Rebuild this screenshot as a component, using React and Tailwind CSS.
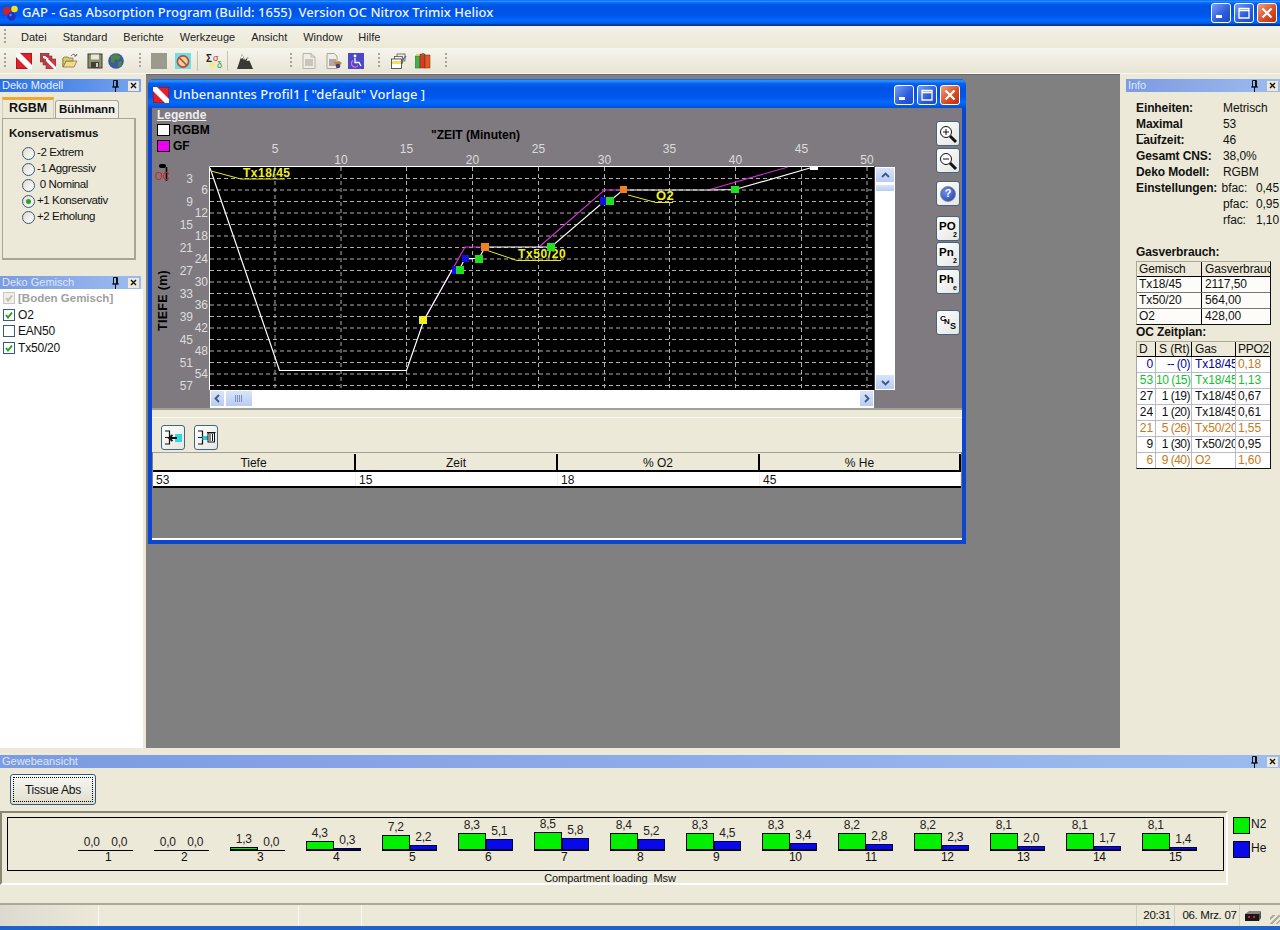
import React from "react";

const Flag = ({ s = 16 }) => (
  <svg width={s} height={s} viewBox="0 0 16 16" className="block">
    <rect x="0" y="0" width="16" height="16" fill="#e0202a" stroke="#400" strokeWidth="0.6" />
    <path d="M0 0H4L16 12V16H12L0 4Z" fill="#fff" />
  </svg>
);
const Flags = () => (
  <svg width="16" height="16" viewBox="0 0 16 16" className="block">
    <rect x="0" y="0" width="9" height="9" fill="#c04048" stroke="#533" strokeWidth="0.5" />
    <rect x="3" y="3" width="9" height="9" fill="#c84048" stroke="#533" strokeWidth="0.5" />
    <rect x="6" y="6" width="10" height="10" fill="#d03a44" stroke="#533" strokeWidth="0.5" />
    <path d="M6 6H8L16 14V16H14L6 8Z" fill="#fff" />
    <path d="M3 3H5L9 6H6L3 5Z" fill="#fff" />
  </svg>
);
const Folder = () => (
  <svg width="16" height="16" viewBox="0 0 16 16" className="block">
    <path d="M1 5V14H12L15 8H4L1 14" fill="#f0dc90" stroke="#8a7a30" strokeWidth="0.8" />
    <path d="M1 5L2 4H6L7 5H11V8H4L1 14Z" fill="#d8c878" stroke="#8a7a30" strokeWidth="0.8" />
    <path d="M9 3C11 0.5 13 1 14 3M14 3L15 1M14 3L12 3" fill="none" stroke="#556" strokeWidth="0.9" />
  </svg>
);
const Floppy = () => (
  <svg width="16" height="16" viewBox="0 0 16 16" className="block">
    <rect x="1" y="1" width="14" height="14" fill="#8f8f70" stroke="#3a3a30" />
    <rect x="4" y="1.5" width="8" height="5" fill="#e8e8d8" />
    <rect x="4" y="9" width="8" height="6" fill="#404038" />
    <rect x="9" y="10" width="2" height="4" fill="#ccc" />
  </svg>
);
const Globe = () => (
  <svg width="16" height="16" viewBox="0 0 16 16" className="block">
    <circle cx="8" cy="8" r="7.8" fill="#3c5a9c" />
    <path d="M3 3L8 1L13 4L10 7L7 6L6 10L3 9ZM10 9L14 8L13 13L10 14Z" fill="#4e8a3e" />
  </svg>
);
const NoSym = () => (
  <svg width="16" height="16" viewBox="0 0 16 16" className="block">
    <rect width="16" height="16" fill="#6fe0e0" />
    <circle cx="8" cy="8.5" r="5.6" fill="#e4d890" stroke="#c04848" strokeWidth="1.7" />
    <path d="M4 4.5L12 12.5" stroke="#c04848" strokeWidth="1.7" />
  </svg>
);
const Sigma = () => (
  <svg width="17" height="16" viewBox="0 0 17 16" className="block">
    <circle cx="6" cy="12" r="3" fill="#f0ec90" />
    <text x="0" y="9" fontSize="10" fontWeight="700" fill="#222" fontFamily="Liberation Sans, sans-serif">Σ</text>
    <text x="7" y="8" fontSize="9" fill="#e02020" fontFamily="Liberation Sans, sans-serif">σ</text>
    <text x="11" y="15" fontSize="9" fill="#28a028" fontFamily="Liberation Sans, sans-serif">δ</text>
  </svg>
);
const Mountain = () => (
  <svg width="16" height="16" viewBox="0 0 16 16" className="block">
    <path d="M0 16L5 1L8 7L11 4L16 16Z" fill="#3a3a34" />
    <path d="M5 1L3.5 6L5.5 5L7.5 7.5ZM11 4L9.5 8L11.5 7.5L13 8.5Z" fill="#fff" />
  </svg>
);
const Doc = () => (
  <svg width="14" height="16" viewBox="0 0 14 16" className="block">
    <path d="M1 0.5H9L13 4V15.5H1Z" fill="#f0eee4" stroke="#b8b4a4" />
    <rect x="3" y="6" width="8" height="7" fill="#c8c6bc" />
    <path d="M9 0.5V4H13" fill="none" stroke="#b8b4a4" />
  </svg>
);
const Doc2 = () => (
  <svg width="16" height="16" viewBox="0 0 16 16" className="block">
    <path d="M1 0.5H8L11 3V15.5H1Z" fill="#f0eee4" stroke="#a8a494" />
    <rect x="3" y="6" width="7" height="7" fill="#b0a8a8" />
    <path d="M8 9L13 8L16 10L12 14L9 12Z" fill="#b88a40" />
    <circle cx="12" cy="13" r="2.3" fill="#484070" />
  </svg>
);
const Wheel = () => (
  <svg width="16" height="16" viewBox="0 0 16 16" className="block">
    <rect width="16" height="16" fill="#4a4ac8" />
    <circle cx="7" cy="3" r="1.4" fill="#fff" />
    <path d="M7 5V9.5H11L13 13" stroke="#fff" strokeWidth="1.3" fill="none" />
    <path d="M5 7.5A3.6 3.6 0 1 0 10 12.5" stroke="#f070c0" strokeWidth="1.2" fill="none" />
  </svg>
);
const Stack = () => (
  <svg width="16" height="16" viewBox="0 0 16 16" className="block">
    <rect x="6" y="1" width="8" height="7" fill="#f0eee4" stroke="#444" strokeWidth="0.7" />
    <rect x="3.5" y="3.5" width="8" height="7" fill="#f0eee4" stroke="#444" strokeWidth="0.7" />
    <rect x="0.5" y="6" width="10" height="9.5" fill="#fff" stroke="#333" strokeWidth="0.8" />
    <rect x="1" y="8" width="9" height="3" fill="#f0e060" />
    <path d="M10 9L15 3" stroke="#668" strokeWidth="1.2" />
  </svg>
);
const Books = () => (
  <svg width="16" height="16" viewBox="0 0 16 16" className="block">
    <rect x="0" y="3" width="5" height="12" fill="#48b048" stroke="#263" strokeWidth="0.5" />
    <rect x="5" y="1" width="5" height="14" fill="#d83a28" stroke="#722" strokeWidth="0.5" />
    <rect x="10" y="2" width="5" height="13" fill="#e05a20" stroke="#722" strokeWidth="0.5" />
    <rect x="1" y="1" width="3" height="2" fill="#e8d040" />
    <rect x="7" y="0" width="2" height="2" fill="#40a040" />
  </svg>
);
const AppLogo = () => (
  <svg width="18" height="18" viewBox="0 0 18 18" className="block">
    <circle cx="5" cy="7" r="4" fill="#d82020" />
    <circle cx="12.5" cy="5" r="3.3" fill="#f0e020" />
    <circle cx="9.5" cy="12.5" r="4.2" fill="#2030c0" />
    <circle cx="8.5" cy="11" r="1.2" fill="#7080e0" />
  </svg>
);

const Grip = ({ className = "" }) => (
  <span className={`block w-[2px] h-[16px] bg-[repeating-linear-gradient(180deg,#a8a594_0_2px,transparent_2px_4px)] ${className}`} />
);
const TSep = ({ className = "" }) => <span className={`block w-[1px] h-[20px] bg-[#c5c2b0] ${className}`} />;

const Pin = () => (
  <svg width="7" height="12" viewBox="0 0 7 12" className="block">
    <path d="M1.5 0.5H5.5V7H1.5ZM0 7H7M3.5 7V12M4.5 1V7" fill="none" stroke="#111" strokeWidth="1" />
  </svg>
);
const CloseBox = () => (
  <span className="flex items-center justify-center w-[11px] h-[10px] bg-[#ece9d8]">
    <svg width="7" height="7" viewBox="0 0 7 7" className="block">
      <path d="M1 1L6 6M6 1L1 6" stroke="#111" strokeWidth="1.4" />
    </svg>
  </span>
);
const DockHead = ({ title, active, className = "" }) => (
  <div
    className={`flex items-center h-[13px] pl-[2px] text-[11px] leading-none ${className} ${
      active
        ? "bg-[linear-gradient(90deg,#2a70e0,#7aa5ee)] text-[#e8f0ff]"
        : "bg-[linear-gradient(90deg,#7b9be2,#9cbcef)] text-[#dfe7f7]"
    }`}
  >
    <span className="flex-1 truncate">{title}</span>
    <span className="mr-[9px]"><Pin /></span>
    <span className="mr-[2px]"><CloseBox /></span>
  </div>
);

const WinBtn = ({ kind }) => {
  const bg =
    kind === "x"
      ? "bg-[linear-gradient(135deg,#f0a080,#d84a20_60%,#b83010)]"
      : "bg-[linear-gradient(135deg,#7aa0f0,#2a5ae0_60%,#2048c8)]";
  return (
    <span className={`flex items-center justify-center w-[20px] h-[20px] rounded-[3px] border border-white ${bg}`}>
      <svg width="14" height="14" viewBox="0 0 14 14" className="block">
        {kind === "min" && <rect x="2" y="9" width="6" height="3" fill="#fff" />}
        {kind === "max" && <path d="M2 4.5H12V12H2ZM2 2.5H12V4.5H2Z" fill="none" stroke="#fff" strokeWidth="1.3" />}
        {kind === "x" && <path d="M2.5 2.5L11.5 11.5M11.5 2.5L2.5 11.5" stroke="#fff" strokeWidth="2.2" />}
      </svg>
    </span>
  );
};

const Radio = ({ on, label }) => (
  <div className="flex items-center h-[16px] pl-[19px]">
    <span className="flex items-center justify-center w-[13px] h-[13px] rounded-full border border-[#3a5a78] bg-[linear-gradient(135deg,#dcdcd0,#fff)]">
      {on && <span className="block w-[5px] h-[5px] rounded-full bg-[#2da02d]" />}
    </span>
    <span className="ml-[2px] text-[11.5px] tracking-[-0.4px] whitespace-pre">{label}</span>
  </div>
);

const Check = ({ on, dis, label, bold }) => (
  <div className="flex items-center h-[16.5px] pl-[3px]">
    <span className={`flex items-center justify-center w-[12px] h-[12px] border ${dis ? "border-[#c8c8bc] bg-[#f0f0e8]" : "border-[#3a5a78] bg-white"}`}>
      {on && (
        <svg width="10" height="10" viewBox="0 0 10 10" className="block">
          <path d="M2 5L4 7.5L8 2.5" fill="none" stroke={dis ? "#bbb" : "#21a121"} strokeWidth="2" />
        </svg>
      )}
    </span>
    <span className={`ml-[3px] ${bold ? "font-bold text-[#a0a0a0] text-[11.5px]" : "text-[12px] tracking-[-0.2px] text-[#111]"}`}>{label}</span>
  </div>
);

const MenuItem = ({ label, className }) => <span className={`text-[11px] text-[#222] ${className}`}>{label}</span>;

const xs = [5, 10, 15, 20, 25, 30, 35, 40, 45, 50];
const xPos = [275, 341, 406.5, 472.5, 538.5, 604.5, 669.5, 735.5, 801.5, 867];
const depths = Array.from({ length: 19 }, (_, i) => (i + 1) * 3);
const yOf = (i) => 178.5 + i * 11.5;

const Chart = () => (
  <svg width="723" height="282" viewBox="152 108 723 282" className="block">
    <text x="431" y="139" fontSize="12" fontWeight="700" fill="#000">"ZEIT (Minuten)</text>
    {xs.map((v, i) => (
      <text key={v} x={xPos[i]} y={i % 2 === 0 ? 153 : 164} textAnchor="middle" fontSize="12" fill="#dcdcdc">{v}</text>
    ))}
    {depths.map((d, i) => (
      <text key={d} x={i % 2 === 0 ? 193 : 208} y={yOf(i) + 4} textAnchor="end" fontSize="12" fill="#dcdcdc">{d}</text>
    ))}
    <text transform="translate(167 331) rotate(-90)" fontSize="12.5" fontWeight="700" letterSpacing="0.3" fill="#000">TIEFE (m)</text>
    <rect x="159" y="164" width="7" height="4" rx="2" fill="#000" />
    <path d="M166.5 167V181" stroke="#000" strokeWidth="1.6" />
    <text x="155" y="180" fontSize="10" fill="#d02020">OC</text>

    <rect x="209.5" y="166.5" width="665" height="224" fill="#000" />
    <path d="M209.5 390V166.5H874" fill="none" stroke="#fff" />
    {depths.map((d, i) => (
      <path key={d} d={`M210 ${yOf(i)}H873`} stroke="#b0b0b0" strokeDasharray="4 3" />
    ))}
    {xPos.map((x) => (
      <path key={x} d={`M${x} 167V390`} stroke="#b0b0b0" strokeDasharray="4 3" />
    ))}
    <path d="M424 320L465 247H485M539 247L604.5 190H623M710 189.5L788 167" fill="none" stroke="#d030d0" strokeWidth="1.2" />
    <path d="M210 168L279.5 370.5H406.5L424 320L452 270H459L465 258.5H479L485 247H539L551 247L604.5 201H610L623 190H710L735 189.5L810 168" fill="none" stroke="#fff" strokeWidth="1.2" />
    <path d="M211 171L241 179H285" fill="none" stroke="#e8e820" />
    <path d="M486 250L517 260.5H561" fill="none" stroke="#e8e820" />
    <path d="M628 195L656 202.5H673" fill="none" stroke="#e8e820" />
    <text x="243" y="177" fontSize="12" fontWeight="700" letterSpacing="0.5" fill="#f0f020">Tx18/45</text>
    <text x="518" y="258" fontSize="12" fontWeight="700" letterSpacing="0.6" fill="#f0f020">Tx50/20</text>
    <text x="656" y="200" fontSize="13" fontWeight="700" letterSpacing="0.5" fill="#f0f020">O2</text>
    <rect x="419" y="316" width="8" height="8" fill="#f0f020" />
    <rect x="452" y="266" width="7" height="8" fill="#1010e0" />
    <rect x="456" y="266" width="8" height="8" fill="#20e020" />
    <rect x="462" y="255" width="7" height="7" fill="#1010e0" />
    <rect x="475" y="255" width="8" height="8" fill="#20e020" />
    <rect x="481" y="243" width="8" height="8" fill="#f08020" />
    <rect x="547" y="243" width="8" height="8" fill="#20e020" />
    <rect x="600" y="197" width="7" height="8" fill="#1010e0" />
    <rect x="606" y="197" width="8" height="8" fill="#20e020" />
    <rect x="620" y="186" width="7" height="7" fill="#f08020" />
    <rect x="731" y="186" width="8" height="7" fill="#20e020" />
    <rect x="810" y="167" width="8" height="3" fill="#fff" />
  </svg>
);

const SBtn = ({ dir, className = "" }) => (
  <span className={`flex items-center justify-center bg-[linear-gradient(180deg,#d8e4fb,#b8ccf2)] border border-white ${className}`}>
    <svg width="9" height="9" viewBox="0 0 9 9" className="block">
      <path
        d={{ up: "M1 6L4.5 2.5L8 6", down: "M1 3L4.5 6.5L8 3", left: "M6 1L2.5 4.5L6 8", right: "M3 1L6.5 4.5L3 8" }[dir]}
        fill="none"
        stroke="#3f5a84"
        strokeWidth="1.8"
      />
    </svg>
  </span>
);

const ToolBtn = ({ children, className = "" }) => (
  <div className={`flex items-center justify-center w-[24px] h-[25px] rounded-[3px] border border-[#45657f] bg-[linear-gradient(135deg,#fff,#e4e6e2)] ${className}`}>
    {children}
  </div>
);
const Mag = ({ plus }) => (
  <svg width="20" height="20" viewBox="0 0 20 20" className="block">
    <circle cx="8" cy="8" r="5.5" fill="#fff" stroke="#111" />
    <path d={plus ? "M5 8H11M8 5V11" : "M5 8H11"} stroke="#111" />
    <path d="M12 12L18 18" stroke="#111" strokeWidth="3" />
  </svg>
);
const SubBtn = ({ main, sub, className }) => (
  <ToolBtn className={className}>
    <span className="relative block w-[18px] h-[20px] text-[11.5px] font-bold leading-[15px] text-black text-left">
      {main}
      <span className="absolute right-0 bottom-[0px] text-[7px] leading-[8px]">{sub}</span>
    </span>
  </ToolBtn>
);

const TreeIcon = ({ del }) => (
  <svg width="20" height="20" viewBox="0 0 20 20" className="block">
    <path d="M2 3H6.5V16H2M2 9.5H6.5" fill="none" stroke="#111" strokeWidth="1.2" />
    {del ? (
      <>
        <rect x="6.5" y="8" width="6" height="4" fill="#30c8d0" />
        <rect x="12" y="5" width="6.5" height="9" fill="#fff" stroke="#111" />
        <path d="M11 4.5H19.5M14 6V13M16.5 6V13" fill="none" stroke="#111" />
      </>
    ) : (
      <>
        <rect x="12" y="6" width="7" height="8" fill="#30d8e0" />
        <path d="M6 10H14M9.5 7L6 10L9.5 13" fill="none" stroke="#111" strokeWidth="1.8" />
      </>
    )}
  </svg>
);

const infoRows = [
  ["Einheiten:", "Metrisch"],
  ["Maximal Tiefe:", "53", true],
  ["Laufzeit:", "46"],
  ["Gesamt CNS:", "38,0%"],
  ["Deko Modell:", "RGBM"],
];
const gasRows = [
  ["Tx18/45", "2117,50"],
  ["Tx50/20", "564,00"],
  ["O2", "428,00"],
];
const B = "text-[#00009a]";
const G = "text-[#10c030]";
const K = "text-[#111]";
const O = "text-[#c47a20]";
const planRows = [
  { d: "0", s: "-- (0)", g: "Tx18/45", p: "0,18", c: B, pc: O },
  { d: "53", s: "10 (15)", g: "Tx18/45", p: "1,13", c: G, pc: G },
  { d: "27", s: "1 (19)", g: "Tx18/45", p: "0,67", c: K, pc: K },
  { d: "24", s: "1 (20)", g: "Tx18/45", p: "0,61", c: K, pc: K },
  { d: "21", s: "5 (26)", g: "Tx50/20", p: "1,55", c: O, pc: O },
  { d: "9", s: "1 (30)", g: "Tx50/20", p: "0,95", c: K, pc: K },
  { d: "6", s: "9 (40)", g: "O2", p: "1,60", c: O, pc: O },
];
const tissue = [
  [0, 0], [0, 0], [1.3, 0], [4.3, 0.3], [7.2, 2.2], [8.3, 5.1], [8.5, 5.8], [8.4, 5.2],
  [8.3, 4.5], [8.3, 3.4], [8.2, 2.8], [8.2, 2.3], [8.1, 2.0], [8.1, 1.7], [8.1, 1.4],
];
const fmt = (n) => n.toFixed(1).replace(".", ",");

const Bar = ({ v, blue }) => (
  <div className="flex flex-col items-center justify-end w-[27.5px]">
    <span className="text-[12px] leading-[13px] tracking-[-0.3px] text-[#222] pb-[1px]">{fmt(v)}</span>
    {v > 0 && (
      <div
        style={{ height: Math.max(1, v * 2.08) }}
        className={`w-full border ${blue ? "bg-[#0808e8] border-[#000050]" : "bg-[#00f000] border-black"}`}
      />
    )}
  </div>
);

export default function App() {
  return (
    <div className="flex flex-col w-[1280px] h-[930px] overflow-hidden bg-[#ece9d8] text-[#111] font-['Liberation_Sans',Arial,sans-serif]">
      {/* title bar */}
      <div className="flex items-center h-[26px] pl-[2px] pr-[3px] bg-[linear-gradient(180deg,#0058ee_0%,#3593ff_4%,#288eff_6%,#127dff_8%,#036ffc_10%,#0262ee_14%,#0057e5_20%,#0054e3_24%,#0055eb_56%,#005bf5_66%,#026afe_76%,#0062ef_86%,#0052d6_92%,#0040ab_94%,#003092_100%)]">
        <AppLogo />
        <span className="ml-[2px] flex-1 whitespace-pre text-[13px] font-['Noto_Sans',sans-serif] font-medium text-[#eef4ff]">
          GAP - Gas Absorption Program (Build: 1655)  Version OC Nitrox Trimix Heliox
        </span>
        <div className="flex gap-[3px]">
          <WinBtn kind="min" />
          <WinBtn kind="max" />
          <WinBtn kind="x" />
        </div>
      </div>

      {/* menu */}
      <div className="flex items-center h-[22px] bg-[linear-gradient(180deg,#f3f1e6,#ece9d8)]">
        <Grip className="ml-[4px]" />
        <MenuItem label="Datei" className="ml-[15px]" />
        <MenuItem label="Standard" className="ml-[16px]" />
        <MenuItem label="Berichte" className="ml-[16px]" />
        <MenuItem label="Werkzeuge" className="ml-[16px]" />
        <MenuItem label="Ansicht" className="ml-[16px]" />
        <MenuItem label="Window" className="ml-[16px]" />
        <MenuItem label="Hilfe" className="ml-[16px]" />
      </div>

      {/* toolbar */}
      <div className="flex items-center h-[26px] bg-[linear-gradient(180deg,#f6f5ee,#e8e5d5)] border-b border-[#f8f8f2]">
        <Grip className="ml-[4px]" />
        <span className="ml-[10px]"><Flag /></span>
        <span className="ml-[8px]"><Flags /></span>
        <span className="ml-[6px]"><Folder /></span>
        <span className="ml-[9px]"><Floppy /></span>
        <span className="ml-[5px]"><Globe /></span>
        <Grip className="ml-[15px]" />
        <span className="ml-[10px] block w-[16px] h-[16px] bg-[#9c9a8c]" />
        <span className="ml-[8px]"><NoSym /></span>
        <TSep className="ml-[6px]" />
        <span className="ml-[8px]"><Sigma /></span>
        <TSep className="ml-[4px]" />
        <span className="ml-[9px]"><Mountain /></span>
        <Grip className="ml-[37px]" />
        <span className="ml-[10px]"><Doc /></span>
        <span className="ml-[10px]"><Doc2 /></span>
        <span className="ml-[6px]"><Wheel /></span>
        <Grip className="ml-[14px]" />
        <span className="ml-[11px]"><Stack /></span>
        <span className="ml-[8px]"><Books /></span>
        <Grip className="ml-[14px]" />
      </div>

      {/* main */}
      <div className="flex h-[674px]">
        {/* left */}
        <div className="flex flex-col w-[146px] pt-[5px] pr-[5px]">
          <DockHead title="Deko Modell" active />
          <div className="h-[184px]">
            <div className="flex items-end h-[26px] pl-[2px] font-bold text-[11.5px]">
              <div className="flex items-center justify-center w-[52px] h-[21px] pb-[1px] border-t-[3px] border-t-[#f0a830] bg-[#ece9d8] border-x border-[#d0cdbc] text-[12.5px]">RGBM</div>
              <div className="flex items-center justify-center w-[64px] h-[18px] ml-[1px] border border-b-0 border-[#a8a594] rounded-t-[3px] bg-[#f2f0e6]">Bühlmann</div>
            </div>
            <div className="ml-[2px] w-[134px] h-[142px] pt-[7px] border border-[#a8a594] border-r-[2px] border-b-[2px] bg-[#ece9d8]">
              <div className="pl-[6px] h-[19px] text-[11.5px] font-bold leading-[15px]">Konservatismus</div>
              <Radio label="-2 Extrem" />
              <Radio label="-1 Aggressiv" />
              <Radio label=" 0 Nominal" />
              <Radio on label="+1 Konservativ" />
              <Radio label="+2 Erholung" />
            </div>
          </div>
          <DockHead title="Deko Gemisch" />
          <div className="flex-1 mr-[-2px] pt-[1px] bg-white">
            <Check on dis bold label="[Boden Gemisch]" />
            <Check on label="O2" />
            <Check label="EAN50" />
            <Check on label="Tx50/20" />
          </div>
        </div>

        {/* MDI */}
        <div className="w-[974px] pt-[5px] pl-[2px] bg-[#808080] border-t border-[#6a6a6a]">
          <div className="flex flex-col w-[818px] h-[465px] -mt-[1px] rounded-t-[6px] bg-[#0a46d0]">
            <div className="flex items-center h-[29px] pt-[3px] pl-[5px] pr-[6px] rounded-t-[6px] bg-[linear-gradient(180deg,#0058ee_0%,#3593ff_6%,#0262ee_16%,#0054e3_30%,#0055eb_60%,#026afe_80%,#0052d6_100%)]">
              <Flag />
              <span className="ml-[4px] flex-1 text-[13px] font-['Noto_Sans',sans-serif] font-medium text-[#eef4ff]">Unbenanntes Profil1 [ "default" Vorlage ]</span>
              <div className="flex gap-[3px]">
                <WinBtn kind="min" />
                <WinBtn kind="max" />
                <WinBtn kind="x" />
              </div>
            </div>
            <div className="flex flex-col w-[810px] h-[432px] ml-[4px] bg-[#808080]">
              <div className="relative flex h-[300px] bg-[#7f7a80]">
                <div className="absolute left-[5px] top-[0px] text-[12px] font-bold leading-none">
                  <div className="h-[14px] pt-[1px] text-[#eeeeee] underline">Legende</div>
                  <div className="flex items-center h-[16px] text-black"><span className="block w-[13px] h-[12px] bg-white border border-black mr-[3px]" />RGBM</div>
                  <div className="flex items-center h-[16px] text-black"><span className="block w-[13px] h-[12px] bg-[#f000f0] border border-black mr-[3px]" />GF</div>
                </div>
                <div className="flex flex-col w-[723px]">
                  <Chart />
                  <div className="flex ml-[58px] w-[664px] h-[18px] bg-white">
                    <SBtn dir="left" className="w-[15px] h-[17px]" />
                    <span className="flex items-center justify-center w-[28px] h-[17px] bg-[linear-gradient(180deg,#d8e4fb,#b8ccf2)] border border-white">
                      <span className="block w-[8px] h-[7px] bg-[repeating-linear-gradient(90deg,#7c90b8_0_1px,transparent_1px_2px)]" />
                    </span>
                    <span className="flex-1" />
                    <SBtn dir="right" className="w-[15px] h-[17px]" />
                  </div>
                </div>
                <div className="flex flex-col w-[20px] h-[223px] mt-[59px] bg-white">
                  <SBtn dir="up" className="w-full h-[16px]" />
                  <span className="block mt-[1px] h-[8px] bg-[linear-gradient(180deg,#d8e4fb,#b8ccf2)] border border-white" />
                  <span className="flex-1" />
                  <SBtn dir="down" className="w-full h-[16px]" />
                </div>
                <div className="flex flex-col ml-[41px] pt-[13px]">
                  <ToolBtn><Mag plus /></ToolBtn>
                  <ToolBtn className="mt-[2px]"><Mag /></ToolBtn>
                  <ToolBtn className="mt-[8px]">
                    <span className="flex items-center justify-center w-[16px] h-[16px] rounded-full bg-[radial-gradient(circle_at_35%_35%,#6d8fe8,#1c3fa8)] border border-[#889] text-white text-[11px] font-bold">?</span>
                  </ToolBtn>
                  <SubBtn main="PO" sub="2" className="mt-[10px]" />
                  <SubBtn main="Pn" sub="2" className="mt-[1px]" />
                  <SubBtn main="Ph" sub="e" className="mt-[2px]" />
                  <ToolBtn className="mt-[16px]">
                    <span className="relative block w-[18px] h-[18px] text-[8px] font-bold leading-none text-black">
                      <span className="absolute left-[1px] top-[1px]">C</span>
                      <span className="absolute left-[5px] top-[4px]">N</span>
                      <span className="absolute left-[11px] top-[8px] text-[9px]">S</span>
                    </span>
                  </ToolBtn>
                </div>
              </div>
              <div className="flex flex-col h-[44px] bg-[#ece9d8] border-t-2 border-[#a0a096]">
                <div className="mt-[7px] flex-1 flex items-start pt-[7px] pl-[9px] gap-[9px] border-t border-[#f8f7f0]">
                  <ToolBtn><TreeIcon /></ToolBtn>
                  <ToolBtn><TreeIcon del /></ToolBtn>
                </div>
              </div>
              <div className="ml-[1px] w-[808px] h-[36px] text-[12px]">
                <div className="grid grid-cols-[203px_202px_202px_201px] h-[20px] pt-[1px] bg-[#ece9d8] border-t border-[#a0a096] border-b-2 border-b-black">
                  {["Tiefe", "Zeit", "% O2", "% He"].map((h) => (
                    <div key={h} className="flex items-center justify-center border-r-2 border-black">{h}</div>
                  ))}
                </div>
                <div className="grid grid-cols-[203px_202px_202px_201px] h-[16px] pt-[1px] bg-white border-b-2 border-black">
                  {["53", "15", "18", "45"].map((c) => (
                    <div key={c} className="flex items-center pl-[3px] border-r border-[#f0f0f0] leading-none">{c}</div>
                  ))}
                </div>
              </div>
              <div className="h-[50px]" />
              <div className="h-[2px] bg-white" />
            </div>
          </div>
        </div>

        {/* gutter + right */}
        <div className="flex flex-col w-[154px] ml-[6px] pt-[5px] pr-[1px] bg-[#ece9d8] text-[12px] tracking-[-0.1px]">
          <DockHead title="Info" className="-mr-[1px]" />
          <div className="pl-[10px] pt-[9px]">
            {infoRows.map(([k, v, wrap]) => (
              <div key={k} className="flex h-[16px]">
                <span className={`block w-[87px] font-bold leading-[15px] ${wrap ? "h-[18px] overflow-hidden pr-[20px]" : "whitespace-nowrap"}`}>{k}</span>
                <span className="leading-[15px]">{v}</span>
              </div>
            ))}
            <div className="flex h-[16px]">
              <span className="block w-[87px] font-bold leading-[15px]">Einstellungen:</span>
              <span className="w-[35px] leading-[15px]">bfac:</span>
              <span className="leading-[15px]">0,45</span>
            </div>
            <div className="flex h-[16px] pl-[87px]">
              <span className="w-[35px] leading-[15px]">pfac:</span>
              <span className="leading-[15px]">0,95</span>
            </div>
            <div className="flex h-[16px] pl-[87px]">
              <span className="w-[35px] leading-[15px]">rfac:</span>
              <span className="leading-[15px]">1,10</span>
            </div>
            <div className="mt-[16px] h-[16px] font-bold leading-[15px]">Gasverbrauch:</div>
            <div className="w-[135px] border border-[#111] border-l-[#aca899] border-t-[#aca899] bg-[#fdfcf8]">
              <div className="flex h-[15px] bg-[#ece9d8] border-b border-black leading-[14px]">
                <span className="w-[65px] pl-[2px] border-r border-black">Gemisch</span>
                <span className="flex-1 pl-[3px] overflow-hidden whitespace-nowrap">Gasverbrauch</span>
              </div>
              {gasRows.map(([a, b]) => (
                <div key={a} className="flex h-[16px] border-b border-[#777] last:border-b-0 last:h-[15px] leading-[15px]">
                  <span className="w-[65px] pl-[2px] border-r border-black">{a}</span>
                  <span className="pl-[3px]">{b}</span>
                </div>
              ))}
            </div>
            <div className="h-[16px] font-bold leading-[14px]">OC Zeitplan:</div>
            <div className="w-[135px] border border-[#111] border-l-[#aca899] border-t-[#aca899] bg-white">
              <div className="flex h-[15px] bg-[#ece9d8] border-b border-black leading-[14px]">
                <span className="w-[19px] pl-[2px] border-r border-black">D</span>
                <span className="w-[36px] pl-[3px] border-r border-black whitespace-nowrap">S (Rt)</span>
                <span className="w-[44px] pl-[3px] border-r border-black">Gas</span>
                <span className="flex-1 pl-[2px] tracking-[-0.3px]">PPO2</span>
              </div>
              {planRows.map((r) => (
                <div key={r.d} className={`flex h-[16px] border-b border-[#b8bcc8] last:border-b-0 last:h-[15px] leading-[15px] ${r.c}`}>
                  <span className="w-[19px] pr-[2px] text-right border-r border-[#b8bcc8]">{r.d}</span>
                  <span className="w-[36px] pr-[1px] text-right border-r border-[#b8bcc8] whitespace-nowrap overflow-hidden tracking-[-0.5px]">{r.s}</span>
                  <span className="w-[44px] pl-[3px] border-r border-[#b8bcc8] overflow-hidden whitespace-nowrap">{r.g}</span>
                  <span className={`flex-1 pl-[2px] ${r.pc}`}>{r.p}</span>
                </div>
              ))}
            </div>
          </div>
        </div>
      </div>

      {/* tissue panel */}
      <div className="flex flex-col h-[157px] pt-[7px] border-b-2 border-[#aca899]">
        <DockHead title="Gewebeansicht" />
        <div className="ml-[10px] mt-[6px] flex items-center justify-center w-[86px] h-[31px] rounded-[3px] border border-[#2f5a80] bg-[linear-gradient(180deg,#f8f8f4,#e0ddcc)] p-[2px] text-[12px] tracking-[-0.2px]">
          <span className="flex items-center justify-center w-full h-full border border-dotted border-black">Tissue Abs</span>
        </div>
        <div className="flex mt-[6px]">
          <div className="w-[1228px] h-[74px] border-t-2 border-l-2 border-t-[#8a8774] border-l-[#8a8774] border-b-2 border-r-2 border-b-white border-r-white">
            <div className="flex items-start ml-[5px] mt-[4px] w-[1217px] h-[54px] pl-[70px] border border-black">
              {tissue.map(([n, h], i) => (
                <div key={i} className="flex flex-col w-[76px]">
                  <div className="flex items-end w-[55px] h-[32px] border-b border-black box-content">
                    <Bar v={n} />
                    <Bar v={h} blue />
                  </div>
                  <div className="pl-[27px] text-[12px] leading-[13px] tracking-[-0.3px]">{i + 1}</div>
                </div>
              ))}
            </div>
            <div className="pr-[8px] text-center whitespace-pre text-[11px] leading-[14px] tracking-[-0.1px]">Compartment loading  Msw</div>
          </div>
          <div className="ml-[5px] text-[12px] leading-none">
            <div className="flex h-[24px] mt-[6px]">
              <span className="block w-[17px] h-[17px] bg-[#00f000] border border-black" />
              <span className="ml-[1px] pt-[1px]">N2</span>
            </div>
            <div className="flex h-[24px]">
              <span className="block w-[17px] h-[17px] bg-[#0808e8] border border-black" />
              <span className="ml-[1px] pt-[1px]">He</span>
            </div>
          </div>
        </div>
      </div>

      {/* status */}
      <div className="flex items-center h-[21px] text-[11.5px] tracking-[-0.3px] bg-[#ece9d8]">
        <div className="w-[99px] h-full border-r border-[#f8f8f4] bg-[linear-gradient(90deg,#dcdad0,#ece9d8)]" />
        <div className="w-[200px] h-full border-r border-[#f8f8f4]" />
        <div className="w-[63px] h-full border-r border-[#f8f8f4]" />
        <div className="w-[775px] h-full border-r border-[#d4d1c0]" />
        <div className="flex items-center justify-center w-[38px] h-full pl-[3px] border-r border-[#d4d1c0]">20:31</div>
        <div className="flex items-center justify-center w-[65px] h-full pl-[5px] border-r border-[#d4d1c0]">06. Mrz. 07</div>
        <svg width="18" height="12" viewBox="0 0 18 12" className="ml-[4px] block">
          <path d="M1 4L5 1H17L15 4Z" fill="#888" />
          <path d="M15 4L17 1V8L15 11Z" fill="#555" />
          <rect x="1" y="4" width="14" height="7" fill="#181818" />
          <rect x="4" y="6" width="2" height="2" fill="#e02020" />
          <rect x="9" y="6" width="2" height="2" fill="#e02020" />
        </svg>
        <span className="ml-[8px] mt-[8px] block w-[10px] h-[9px] bg-[repeating-linear-gradient(135deg,transparent_0_2px,#b0ad9c_2px_4px)]" />
      </div>
      <div className="h-[4px] bg-[#1f62c8]" />
    </div>
  );
}
